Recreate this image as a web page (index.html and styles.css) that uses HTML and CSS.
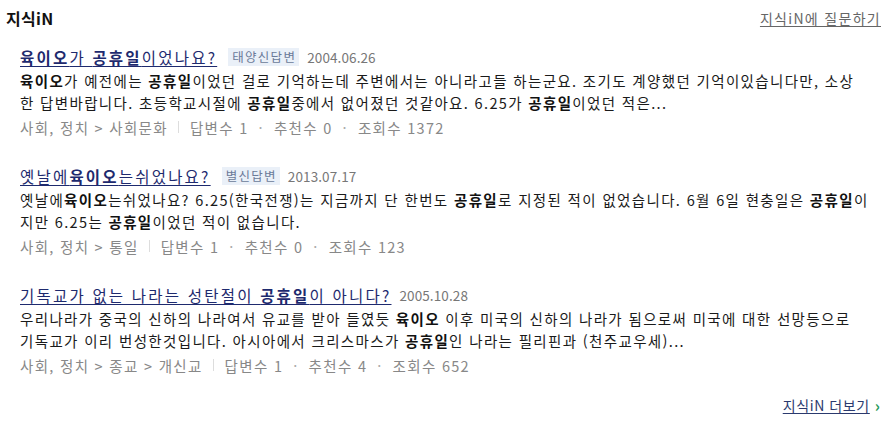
FILE: index.html
```html
<!DOCTYPE html>
<html lang="ko">
<head>
<meta charset="utf-8">
<link rel="stylesheet" href="styles.css">
</head>
<body>
<div class="section">
  <div class="head">
    <h2 class="head-title">지식iN</h2>
    <a class="head-link" href="#">지식iN에 질문하기</a>
  </div>
  <ul class="list">
    <li class="item">
      <div class="title-row">
        <a class="title" href="#"><b>육이오</b>가 <b>공휴일</b>이었나요?</a>
        <span class="badge">태양신답변</span>
        <span class="date">2004.06.26</span>
      </div>
      <p class="desc"><b>육이오</b>가 예전에는 <b>공휴일</b>이었던 걸로 기억하는데 주변에서는 아니라고들 하는군요. 조기도 계양했던 기억이있습니다만, 소상<br>한 답변바랍니다. 초등학교시절에 <b>공휴일</b>중에서 없어졌던 것같아요. 6.25가 <b>공휴일</b>이었던 적은...</p>
      <div class="meta"><span>사회, 정치 &gt; 사회문화</span><span class="bar"></span><span>답변수 1</span><span class="dot">·</span><span>추천수 0</span><span class="dot">·</span><span>조회수 1372</span></div>
    </li>
    <li class="item">
      <div class="title-row">
        <a class="title" href="#">옛날에<b>육이오</b>는쉬었나요?</a>
        <span class="badge">별신답변</span>
        <span class="date">2013.07.17</span>
      </div>
      <p class="desc">옛날에<b>육이오</b>는쉬었나요? 6.25(한국전쟁)는 지금까지 단 한번도 <b>공휴일</b>로 지정된 적이 없었습니다. 6월 6일 현충일은 <b>공휴일</b>이<br>지만 6.25는 <b>공휴일</b>이었던 적이 없습니다.</p>
      <div class="meta"><span>사회, 정치 &gt; 통일</span><span class="bar"></span><span>답변수 1</span><span class="dot">·</span><span>추천수 0</span><span class="dot">·</span><span>조회수 123</span></div>
    </li>
    <li class="item">
      <div class="title-row">
        <a class="title" href="#">기독교가 없는 나라는 성탄절이 <b>공휴일</b>이 아니다?</a>
        <span class="date">2005.10.28</span>
      </div>
      <p class="desc">우리나라가 중국의 신하의 나라여서 유교를 받아 들였듯 <b>육이오</b> 이후 미국의 신하의 나라가 됨으로써 미국에 대한 선망등으로<br>기독교가 이리 번성한것입니다. 아시아에서 크리스마스가 <b>공휴일</b>인 나라는 필리핀과 (천주교우세)...</p>
      <div class="meta"><span>사회, 정치 &gt; 종교 &gt; 개신교</span><span class="bar"></span><span>답변수 1</span><span class="dot">·</span><span>추천수 4</span><span class="dot">·</span><span>조회수 652</span></div>
    </li>
  </ul>
  <div class="more">
    <a class="more-link" href="#">지식iN 더보기</a><span class="arrow">›</span>
  </div>
</div>
</body>
</html>
```
FILE: styles.css
```css
html, body {
  margin: 0;
  padding: 0;
  background: #fff;
}
body {
  font-family: "Noto Sans CJK KR", "Noto Sans", sans-serif;
  color: #222;
  width: 885px;
  height: 422px;
  overflow: hidden;
}
.section {
  padding: 0 5px 0 6px;
}
.head {
  display: flex;
  justify-content: space-between;
  align-items: center;
  height: 36px;
}
.head-title {
  margin: 0;
  font-size: 16px;
  font-weight: 700;
  color: #111;
  letter-spacing: 0.3px;
}
.head-link {
  font-size: 14px;
  color: #666;
  text-decoration: underline;
  text-underline-offset: 2px;
  letter-spacing: 1.3px;
  margin-right: -1px;
}
.list {
  list-style: none;
  margin: 8px 0 0;
  padding: 0 0 0 14px;
  display: flex;
  flex-direction: column;
  gap: 23px;
}
.item {
  display: flex;
  flex-direction: column;
}
.title-row {
  display: flex;
  align-items: center;
  height: 26px;
  gap: 11px;
}
.title {
  font-size: 15.5px;
  color: #1e2a6e;
  text-decoration: underline;
  text-underline-offset: 2px;
  letter-spacing: 2.2px;
}
.title b {
  font-weight: 700;
}
.badge {
  background: #eaf0f8;
  color: #6a7a98;
  font-size: 12.5px;
  line-height: 18px;
  padding: 0 3px 0 4px;
  letter-spacing: 1.3px;
}
.date {
  font-size: 13.5px;
  color: #777;
  letter-spacing: 0.1px;
  margin-left: -3px;
}
.desc {
  margin: 0;
  font-size: 14.5px;
  line-height: 22px;
  color: #1a1a1a;
  letter-spacing: 1.35px;
  white-space: nowrap;
}
.desc b {
  font-weight: 700;
  color: #111;
}
.meta {
  display: flex;
  align-items: center;
  height: 26px;
  font-size: 14.5px;
  color: #888;
  letter-spacing: 1.3px;
}
.bar {
  width: 1px;
  height: 12px;
  background: #ddd;
  margin: 0 11px 0 10px;
}
.dot {
  margin: 0 10px;
  color: #aaa;
}
.more {
  display: flex;
  justify-content: flex-end;
  align-items: center;
  height: 26px;
  margin-top: 14px;
  gap: 5px;
}
.more-link {
  font-size: 14px;
  color: #2b3a6e;
  text-decoration: underline;
  text-underline-offset: 2px;
  letter-spacing: 0.6px;
}
.arrow {
  color: #1f9a5a;
  font-size: 16px;
  font-weight: 700;
  line-height: 1;
}
```
